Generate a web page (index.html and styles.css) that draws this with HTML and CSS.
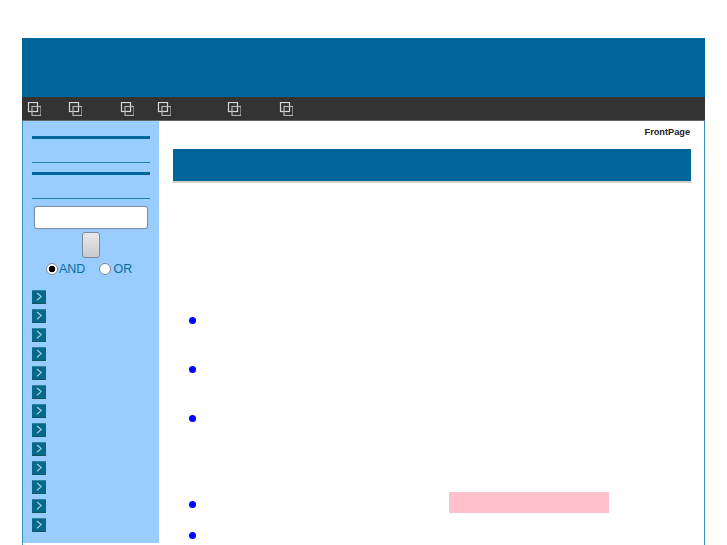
FILE: index.html
```html
<!DOCTYPE html>
<html lang="en">
<head>
<meta charset="utf-8">
<title>FrontPage</title>
<link rel="stylesheet" href="styles.css">
</head>
<body>
<svg class="defs" width="0" height="0" aria-hidden="true">
  <symbol id="win" viewBox="0 0 14 14">
    <rect x="1.5" y="0.5" width="9" height="9" fill="none" stroke="#d8d8d8" stroke-width="1.2"/>
    <rect x="5" y="4.5" width="9" height="9" fill="none" stroke="#b4b4b4" stroke-width="1.2"/>
  </symbol>
  <symbol id="arrow" viewBox="0 0 14 14">
    <rect width="14" height="14" fill="#08688a"/>
    <rect width="14" height="1" fill="#2f86a0"/>
    <rect y="13" width="14" height="1" fill="#12555e"/>
    <path d="M5 3 9.2 6.6 5 10.2" fill="none" stroke="#9fd0e8" stroke-width="1.2"/>
  </symbol>
</svg>
<div class="page">
  <header class="header"></header>
  <nav class="nav">
    <span class="nav-item w41"><svg class="nav-icon"><use href="#win"/></svg></span>
    <span class="nav-item w52"><svg class="nav-icon"><use href="#win"/></svg></span>
    <span class="nav-item w37"><svg class="nav-icon"><use href="#win"/></svg></span>
    <span class="nav-item w70"><svg class="nav-icon"><use href="#win"/></svg></span>
    <span class="nav-item w52"><svg class="nav-icon"><use href="#win"/></svg></span>
    <span class="nav-item"><svg class="nav-icon"><use href="#win"/></svg></span>
  </nav>
  <div class="body">
    <aside class="side">
      <div class="side-block">
        <div class="rule-thick"></div>
        <div class="rule-thin"></div>
      </div>
      <div class="side-block second">
        <div class="rule-thick"></div>
        <div class="rule-thin"></div>
      </div>
      <form class="search">
        <input class="search-input" type="text">
        <button class="search-btn" type="button"></button>
        <div class="radios">
          <label class="radio-label"><span class="radio on"></span>AND</label>
          <label class="radio-label"><span class="radio"></span>OR</label>
        </div>
      </form>
      <ul class="menu">
        <li><svg class="arrow"><use href="#arrow"/></svg></li>
        <li><svg class="arrow"><use href="#arrow"/></svg></li>
        <li><svg class="arrow"><use href="#arrow"/></svg></li>
        <li><svg class="arrow"><use href="#arrow"/></svg></li>
        <li><svg class="arrow"><use href="#arrow"/></svg></li>
        <li><svg class="arrow"><use href="#arrow"/></svg></li>
        <li><svg class="arrow"><use href="#arrow"/></svg></li>
        <li><svg class="arrow"><use href="#arrow"/></svg></li>
        <li><svg class="arrow"><use href="#arrow"/></svg></li>
        <li><svg class="arrow"><use href="#arrow"/></svg></li>
        <li><svg class="arrow"><use href="#arrow"/></svg></li>
        <li><svg class="arrow"><use href="#arrow"/></svg></li>
        <li><svg class="arrow"><use href="#arrow"/></svg></li>
      </ul>
    </aside>
    <main class="main">
      <div class="crumb">FrontPage</div>
      <div class="banner"></div>
      <ul class="list">
        <li class="row"><span class="dot"></span></li>
        <li class="row"><span class="dot"></span></li>
        <li class="row"><span class="dot"></span></li>
        <li class="row low"><span class="dot"></span><span class="pink"></span></li>
        <li class="row last"><span class="dot"></span></li>
      </ul>
    </main>
  </div>
</div>
</body>
</html>
```
FILE: styles.css
```css
* { box-sizing: border-box; }
html, body { margin: 0; padding: 0; background: #fff; overflow: hidden; height: 545px; }
body { font-family: "Liberation Sans", Arial, sans-serif; }
.defs { position: absolute; }
.page {
  width: 683px;
  margin: 38px 0 0 22px;
  height: 507px;
  border-left: 1px solid #3d8fbd;
  border-right: 1px solid #3d8fbd;
  display: flex;
  flex-direction: column;
}
.header { height: 59px; margin: 0 -1px; background: #006699; }
.nav {
  height: 24px;
  margin: 0 -1px;
  padding: 5px 0 0 5px;
  background: #333;
  border-bottom: 1px solid #666;
  display: flex;
}
.nav-item { display: block; height: 14px; }
.nav-icon { display: block; width: 14px; height: 14px; }
.w41 { width: 41px; }
.w52 { width: 52px; }
.w37 { width: 37px; }
.w70 { width: 70px; }
.body { display: flex; flex: 1; min-height: 0; }
.side {
  width: 136px;
  height: 422px;
  background: #99ccff;
  padding: 15px 9px 0 9px;
}
.rule-thick { height: 3px; background: #006699; }
.rule-thin { height: 1px; background: #1f7fb0; margin-top: 23px; }
.side-block.second { margin-top: 9px; }
.search { display: flex; flex-direction: column; align-items: flex-start; margin-top: 7px; }
.search-input {
  display: block;
  width: 114px;
  height: 23px;
  margin: 0 0 0 2px;
  padding: 0;
  background: #fff;
  border: 1px solid #7f8fa3;
  border-radius: 3px;
  box-shadow: 0 0 1px #7f8fa3;
}
.search-btn {
  display: block;
  width: 18px;
  height: 26px;
  margin: 3px 0 0 50px;
  padding: 0;
  border: 1px solid #7e8a9a;
  border-radius: 3px;
  background: linear-gradient(#e8e8ec, #c9c9d0);
}
.radios { display: flex; align-items: center; margin: 3px 0 0 14px; height: 15px; color: #0a6fa0; font-size: 12.5px; }
.radio-label { display: flex; align-items: center; margin-right: 14px; }
.radio-label:last-child { margin-right: 0; }
.radio {
  display: block;
  width: 12px;
  height: 12px;
  margin-right: 1px;
  border-radius: 50%;
  background: #fff;
  border: 1px solid #7f8a96;
}
.radio-label:last-child .radio { margin-right: 2px; }
.radio.on { background: radial-gradient(circle, #000 0 3px, #fff 3.6px); }
.menu { list-style: none; margin: 14px 0 0 0; padding: 0; }
.menu li { height: 19px; }
.arrow { display: block; width: 14px; height: 14px; }
.main { flex: 1; padding: 0 13px 0 14px; min-width: 0; }
.crumb {
  height: 28px;
  padding: 6px 1px 0 0;
  text-align: right;
  font-size: 9.2px;
  font-weight: bold;
  line-height: 11px;
  color: #222;
}
.banner {
  height: 34px;
  background: #006699;
  border-bottom: 2px solid #cfcfcf;
}
.list { list-style: none; margin: 0; padding: 113px 0 0 16px; }
.row { display: flex; align-items: center; height: 49px; }
.row.low { height: 31px; margin-top: 46px; }
.row.last { height: 31px; }
.dot { display: block; width: 7px; height: 7px; border-radius: 50%; background: #0000ff; flex: none; }
.pink { display: block; width: 160px; height: 21px; margin: -5px 0 0 253px; background: #ffc0cb; }
```
